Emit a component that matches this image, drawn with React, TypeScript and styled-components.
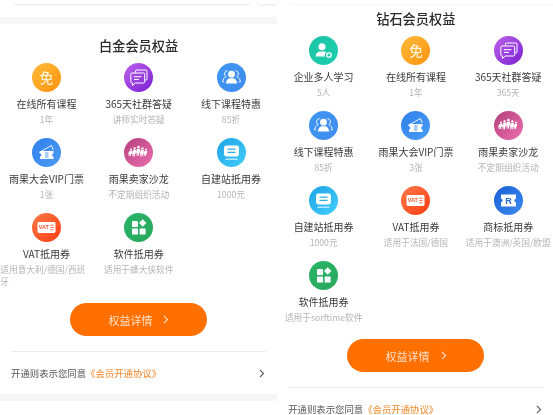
import React from "react";
import styled, { createGlobalStyle } from "styled-components";

const GlobalStyle = createGlobalStyle`
	html, body {
		margin: 0;
		padding: 0;
		background: #fff;
	}
	body {
		font-family: "Noto Sans CJK SC", "Liberation Sans", sans-serif;
		overflow: hidden;
	}
`;

const Page = styled.div`
	display: flex;
	width: 553px;
	height: 415px;
	overflow: hidden;
	filter: blur(0.35px);
`;

const Panel = styled.div`
	flex: 0 0 276.5px;
`;

const PeekRow = styled.div`
	display: flex;
	gap: 8px;
	height: 4px;
	padding-left: 14px;
`;

const PeekCard = styled.div<{ $width?: number; $faint?: boolean }>`
	flex: ${(p) => (p.$width ? `0 0 ${p.$width}px` : "1")};
	background: #fff;
	box-shadow: ${(p) => (p.$faint ? "0 1px 1px #f6f6f6" : "0 1px 3px rgba(0, 0, 0, 0.09)")};
`;

const Band = styled.div<{ $top: number }>`
	height: 7px;
	margin-top: ${(p) => p.$top}px;
	background: #f6f6f6;
`;

const Title = styled.h2<{ $top: number }>`
	margin: ${(p) => p.$top}px 0 7px;
	height: 20px;
	line-height: 20px;
	text-align: center;
	font-size: 13.2px;
	font-weight: 500;
	color: #2b2b2b;
`;

const Grid = styled.div`
	display: grid;
	grid-template-columns: repeat(3, 92.3px);
	padding-left: 0.3px;
`;

const Item = styled.div`
	padding-bottom: 12px;
	text-align: center;
	line-height: 0;
`;

const Disc = styled.div<{ $from: string; $to: string }>`
	display: flex;
	align-items: center;
	justify-content: center;
	width: 29px;
	height: 29px;
	margin: 0 auto;
	border-radius: 50%;
	background: linear-gradient(135deg, ${(p) => p.$from}, ${(p) => p.$to});
	svg {
		display: block;
	}
`;

const FreeGlyph = styled.span`
	font-size: 13.5px;
	font-weight: 500;
	line-height: 1;
	color: #fff3d6;
`;

const Label = styled.div`
	margin-top: 5px;
	height: 14px;
	line-height: 14px;
	font-size: 10px;
	color: #3a3a3a;
	white-space: nowrap;
`;

const Sub = styled.div`
	display: inline-block;
	margin-top: 3px;
	line-height: 12px;
	font-size: 8.7px;
	color: #b4b4b4;
	text-align: left;
	vertical-align: top;
`;

const DetailButton = styled.button`
	display: flex;
	align-items: center;
	justify-content: center;
	gap: 11px;
	width: 137px;
	height: 33px;
	margin: 3px auto 0;
	padding: 0;
	border: 0;
	border-radius: 17px;
	background: #ff7000;
	color: #ffdfc6;
	font-family: inherit;
	font-size: 11px;
`;

const Agreement = styled.div`
	display: flex;
	align-items: center;
	justify-content: space-between;
	height: 42px;
	margin: 15px 11px 0;
	padding-right: 2px;
	border-top: 1px solid #ececec;
	font-size: 9.4px;
	color: #555;
`;

const AgreementLink = styled.span`
	color: #f0882a;
`;

const Chevron = ({ size, color }: { size: number; color: string }) => (
	<svg width={size * 0.6} height={size} viewBox="0 0 6 10" fill="none">
		<path d="M1 1l4 4-4 4" stroke={color} strokeWidth="1.2" />
	</svg>
);

const Glyph = ({ children }: { children: React.ReactNode }) => (
	<svg width="29" height="29" viewBox="0 0 29 29" fill="none">
		{children}
	</svg>
);

const person = (x: number, y: number, s: number) => (
	<g key={x} fill="#fff">
		<circle cx={x} cy={y} r={1.3 * s} />
		<path d={`M${x - 1.7 * s} ${y + 1.8 * s}h${3.4 * s}l-.4 ${4 * s}h-.7l-.2 ${3 * s}h-.8l-.2 ${-3 * s}h-.2l-.2 ${3 * s}h-.8l-.2 ${-3 * s}h-.6z`} />
	</g>
);

const icons: Record<string, React.ReactNode> = {
	free: <FreeGlyph>免</FreeGlyph>,
	chat: (
		<Glyph>
			<path d="M11.5 9.5V8a1 1 0 0 1 1-1h9.5a1 1 0 0 1 1 1v8a1 1 0 0 1-1 1h-1" stroke="#fff" strokeWidth="1" />
			<path d="M8 10h11.5a1.2 1.2 0 0 1 1.2 1.2v7.6a1.2 1.2 0 0 1-1.2 1.2h-8.2l-2.8 2.4V20H8a1.2 1.2 0 0 1-1.2-1.2v-7.6A1.2 1.2 0 0 1 8 10z" stroke="#fff" strokeWidth="1" />
			<path d="M10 13.7h7.5M10 16.4h5" stroke="#fff" strokeWidth="1" />
		</Glyph>
	),
	group: (
		<Glyph>
			<circle cx="14.5" cy="11.2" r="3.4" fill="#fff" />
			<path d="M8.8 20.6c.3-3.6 2.6-5.4 4-5.4h3.4c1.4 0 3.7 1.8 4 5.4z" fill="#fff" />
			<path d="M10.6 7.6a3.2 3.2 0 0 0-1.4 6c-2 .8-3.3 2.6-3.6 5.2h1.6M18.4 7.6a3.2 3.2 0 0 1 1.4 6c2 .8 3.3 2.6 3.6 5.2h-1.6" stroke="#fff" strokeWidth="0.9" />
		</Glyph>
	),
	ticket: (
		<Glyph>
			<path d="M7 14.5l12.5-7 1.8 4.5" stroke="#fff" strokeWidth="0.9" />
			<path d="M8 13h13.5v2.6a1.4 1.4 0 0 0 0 2.8V21H8v-2.6a1.4 1.4 0 0 0 0-2.8z" fill="#fff" />
			<path d="M13 15h3.5M13 17h3.5M13 19h3.5" stroke="#3f8eef" strokeWidth="0.9" />
		</Glyph>
	),
	salon: (
		<Glyph>
			{person(7, 11.5, 0.75)}
			{person(10.6, 10.5, 0.9)}
			{person(14.5, 9, 1)}
			{person(18.4, 10.5, 0.9)}
			{person(22, 11.5, 0.75)}
		</Glyph>
	),
	site: (
		<Glyph>
			<rect x="7" y="7.5" width="15" height="11" rx="2.4" fill="#fff" />
			<path d="M10.5 11.2h8M10.5 14.4h8" stroke="#2bb0ec" strokeWidth="1.2" />
			<path d="M8.5 21.2h12" stroke="#d6f3ff" strokeWidth="1.2" />
		</Glyph>
	),
	vat: (
		<Glyph>
			<rect x="5.5" y="9" width="18" height="11" rx="1.4" fill="#fff" />
			<text x="6.8" y="16.3" fontFamily="Liberation Sans" fontSize="5.4" fontWeight="700" fill="#f2552a">VAT</text>
			<path d="M18.3 12.2h3.4M18.3 14.5h3.4M18.3 16.8h3.4" stroke="#f2552a" strokeWidth="0.8" />
		</Glyph>
	),
	software: (
		<Glyph>
			<rect x="8" y="8" width="6" height="6" rx="0.4" fill="#fff" />
			<rect x="16.1" y="7.4" width="5.2" height="5.2" transform="rotate(45 18.7 10)" fill="#fff" />
			<rect x="8" y="15.6" width="6" height="6" rx="0.4" fill="#fff" />
			<rect x="15.6" y="15.6" width="6" height="6" rx="0.4" fill="#fff" />
		</Glyph>
	),
	team: (
		<Glyph>
			<circle cx="13" cy="10.8" r="3.5" fill="#fff" />
			<path d="M6.8 20.5c0-3.6 2.6-5 4.3-5h3.8c1 0 1.8.3 2.5.8-1.3.7-1.8 2.3-1.4 4.2z" fill="#fff" />
			<circle cx="20" cy="19" r="2.2" stroke="#fff" strokeWidth="1.3" />
		</Glyph>
	),
	brand: (
		<Glyph>
			<path d="M7 8.5h15v4.3a1.7 1.7 0 0 0 0 3.4v4.3H7v-4.3a1.7 1.7 0 0 0 0-3.4z" fill="#fff" />
			<text x="14.5" y="17.8" textAnchor="middle" fontFamily="Liberation Sans" fontSize="9" fontWeight="700" fill="#2368dc">R</text>
		</Glyph>
	),
};

const discColors: Record<string, [string, string]> = {
	free: ["#ffbb3a", "#ff9210"],
	chat: ["#bd62ea", "#7a1fd2"],
	group: ["#3f97f2", "#3f8bee"],
	ticket: ["#2f80ec", "#4b9df4"],
	salon: ["#b43f7e", "#ec6fae"],
	site: ["#1fa4e6", "#43cdfb"],
	vat: ["#ff7a4a", "#fb3c10"],
	software: ["#28b368", "#2aa95c"],
	team: ["#1dc3a6", "#1bcfae"],
	brand: ["#1a5ed6", "#3b8cf0"],
};

type Benefit = { icon: string; label: string; sub: string };

const platinum: Benefit[] = [
	{ icon: "free", label: "在线所有课程", sub: "1年" },
	{ icon: "chat", label: "365天社群答疑", sub: "讲师实时答疑" },
	{ icon: "group", label: "线下课程特惠", sub: "85折" },
	{ icon: "ticket", label: "雨果大会VIP门票", sub: "1张" },
	{ icon: "salon", label: "雨果卖家沙龙", sub: "不定期组织活动" },
	{ icon: "site", label: "自建站抵用券", sub: "1000元" },
	{ icon: "vat", label: "VAT抵用券", sub: "适用意大利/德国/西班牙" },
	{ icon: "software", label: "软件抵用券", sub: "适用于蜂大侠软件" },
];

const diamond: Benefit[] = [
	{ icon: "team", label: "企业多人学习", sub: "5人" },
	{ icon: "free", label: "在线所有课程", sub: "1年" },
	{ icon: "chat", label: "365天社群答疑", sub: "365天" },
	{ icon: "group", label: "线下课程特惠", sub: "85折" },
	{ icon: "ticket", label: "雨果大会VIP门票", sub: "3张" },
	{ icon: "salon", label: "雨果卖家沙龙", sub: "不定期组织活动" },
	{ icon: "site", label: "自建站抵用券", sub: "1000元" },
	{ icon: "vat", label: "VAT抵用券", sub: "适用于法国/德国" },
	{ icon: "brand", label: "商标抵用券", sub: "适用于澳洲/英国/欧盟" },
	{ icon: "software", label: "软件抵用券", sub: "适用于sorftime软件" },
];

const Benefits = ({ items }: { items: Benefit[] }) => (
	<Grid>
		{items.map((item) => (
			<Item key={item.label}>
				<Disc $from={discColors[item.icon][0]} $to={discColors[item.icon][1]}>
					{icons[item.icon]}
				</Disc>
				<Label>{item.label}</Label>
				<Sub>{item.sub}</Sub>
			</Item>
		))}
	</Grid>
);

const Footer = () => (
	<>
		<DetailButton>
			权益详情
			<Chevron size={9} color="#ffdfc6" />
		</DetailButton>
		<Agreement>
			<span>
				开通则表示您同意<AgreementLink>《会员开通协议》</AgreementLink>
			</span>
			<Chevron size={9} color="#555" />
		</Agreement>
	</>
);

const App: React.FC = () => {
	return (
		<>
			<GlobalStyle />
			<Page>
				<Panel>
					<PeekRow>
						<PeekCard $width={236} />
						<PeekCard />
					</PeekRow>
					<Band $top={13} />
					<Title $top={12}>白金会员权益</Title>
					<Benefits items={platinum} />
					<Footer />
					<Band $top={0} />
				</Panel>
				<Panel>
					<PeekRow>
						<PeekCard $faint />
					</PeekRow>
					<Title $top={5}>钻石会员权益</Title>
					<Benefits items={diamond} />
					<Footer />
				</Panel>
			</Page>
		</>
	);
};

export default App;
